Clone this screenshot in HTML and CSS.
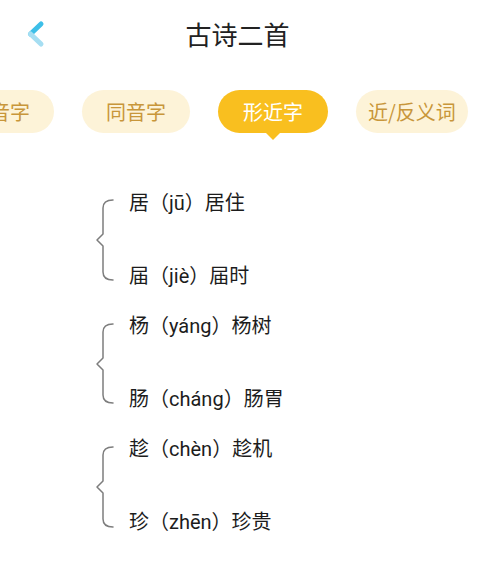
FILE: index.html
```html
<!DOCTYPE html>
<html lang="zh-CN">
<head>
<meta charset="utf-8">
<title>古诗二首</title>
<link rel="stylesheet" href="styles.css">
</head>
<body>
<header class="topbar">
  <div class="back">
    <svg class="back-icon" width="22" height="28" viewBox="0 0 22 28">
      <line x1="16" y1="4" x2="5.5" y2="14" stroke="#3dbfe8" stroke-width="5" stroke-linecap="round"/>
      <line x1="5.5" y1="14" x2="16" y2="24" stroke="#a6def2" stroke-width="5" stroke-linecap="round"/>
    </svg>
  </div>
  <h1 class="title">古诗二首</h1>
  <div></div>
</header>

<nav class="tabs">
  <div class="tab">近音字</div>
  <div class="tab">同音字</div>
  <div class="tab active">形近字</div>
  <div class="tab">近/反义词</div>
</nav>

<main class="groups">
  <section class="group">
    <svg class="brace" width="20" height="101" viewBox="0 0 20 101"><path d="M18 11 Q8 11 8 19 L8 45 L2 51 L8 57 L8 83 Q8 91 18 91"/></svg>
    <div class="lines">
      <p class="line">居（jū）居住</p>
      <p class="line">届（jiè）届时</p>
    </div>
  </section>
  <section class="group">
    <svg class="brace" width="20" height="101" viewBox="0 0 20 101"><path d="M18 12 Q8 12 8 20 L8 46 L2 52 L8 58 L8 83 Q8 91 18 91"/></svg>
    <div class="lines">
      <p class="line">杨（yáng）杨树</p>
      <p class="line">肠（cháng）肠胃</p>
    </div>
  </section>
  <section class="group">
    <svg class="brace" width="20" height="101" viewBox="0 0 20 101"><path d="M18 12 Q8 12 8 20 L8 46 L2 52 L8 58 L8 84 Q8 92 18 92"/></svg>
    <div class="lines">
      <p class="line">趁（chèn）趁机</p>
      <p class="line">珍（zhēn）珍贵</p>
    </div>
  </section>
</main>
</body>
</html>
```

FILE: styles.css
```css
html, body {
  margin: 0;
  padding: 0;
  background: #ffffff;
}

body {
  width: 479px;
  height: 567px;
  overflow: hidden;
  font-family: Roboto, "Noto Sans CJK SC", sans-serif;
  color: #1c1c1c;
}

.topbar {
  display: grid;
  grid-template-columns: 1fr auto 1fr;
  align-items: center;
  height: 67px;
}

.back {
  display: flex;
  align-items: center;
  padding-left: 25px;
}

.back-icon {
  display: block;
}

.title {
  margin: 0;
  font-family: "Noto Sans CJK SC", sans-serif;
  font-size: 26px;
  font-weight: 400;
  line-height: 1;
  color: #222222;
  padding-right: 4px;
}

.tabs {
  display: flex;
  gap: 28px;
  margin: 23px 0 0 -54px;
}

.tab {
  position: relative;
  flex-shrink: 0;
  box-sizing: border-box;
  min-width: 108px;
  height: 43px;
  padding: 0 12px;
  border-radius: 22px;
  background: #fdf3d8;
  color: #c8963a;
  font-family: "Noto Sans CJK SC", sans-serif;
  font-size: 20px;
  display: flex;
  align-items: center;
  justify-content: center;
  white-space: nowrap;
}

.tab.active {
  background: #f9bf1f;
  color: #ffffff;
  min-width: 110px;
}

.tab.active::after {
  content: "";
  position: absolute;
  left: 50%;
  bottom: -7px;
  margin-left: -7px;
  border-left: 7px solid transparent;
  border-right: 7px solid transparent;
  border-top: 7px solid #f9bf1f;
}

.groups {
  display: flex;
  flex-direction: column;
  gap: 22px;
  margin-top: 56px;
  padding-left: 95px;
}

.group {
  display: flex;
  gap: 14px;
}

.brace {
  display: block;
  flex-shrink: 0;
}

.brace path {
  fill: none;
  stroke: #7d7d7d;
  stroke-width: 1.5;
  stroke-linejoin: round;
  stroke-linecap: round;
}

.lines {
  display: flex;
  flex-direction: column;
  gap: 45px;
}

.line {
  margin: 0;
  font-size: 20px;
  line-height: 28px;
  white-space: nowrap;
}
```
